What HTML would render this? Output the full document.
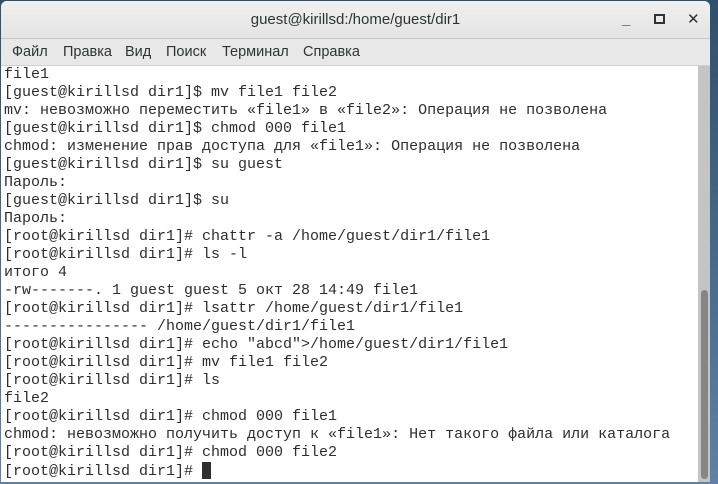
<!DOCTYPE html>
<html><head><meta charset="utf-8"><style>
body{margin:0;width:718px;height:484px;background:linear-gradient(#2f4f6b,#5d82a6);overflow:hidden;position:relative;font-family:"Liberation Sans","DejaVu Sans",sans-serif}
.win{position:absolute;left:1px;top:1px;width:709px;height:481px;background:#fff;border-radius:6px 6px 0 0;overflow:hidden}
.title{position:absolute;left:0;top:0;width:709px;height:37px;background:linear-gradient(#f0f0f0,#e4e4e4);border-bottom:1px solid #c8c8c8;text-align:center;line-height:37px;font-size:15px;color:#2e3436}
.menu{position:absolute;left:0;top:38px;width:709px;height:26px;background:#e8e8e8;border-bottom:1px solid #d0d0d0;font-size:14.5px;color:#2e3436;line-height:26px}
.menu span{position:absolute;top:0}
.b{position:absolute;top:0;font-size:15px;font-weight:bold;color:#2e3436}
.term{position:absolute;left:3px;top:65px;font-family:"Liberation Mono","DejaVu Sans Mono",monospace;font-size:15px;line-height:18px;color:#2e2e2e;white-space:pre}
.sb{position:absolute;left:697px;top:65px;width:12px;height:416px;background:#c4c4c4}
.sl{position:absolute;left:700px;top:289px;width:7px;height:189px;background:#858585;border-radius:4px}
.cur{display:inline-block;width:9px;height:17px;background:#2e2e2e;vertical-align:-4px}
</style></head><body>
<div class="win">
<div class="title">guest@kirillsd:/home/guest/dir1
<span class="b" style="left:621px">_</span>
<span class="b" style="left:653px;top:13px;width:7px;height:6px;border:2px solid #2e3436;line-height:0"></span>
<span class="b" style="left:686px">✕</span></div>
<div class="menu"><span style="left:11px">Файл</span><span style="left:62px">Правка</span><span style="left:124px">Вид</span><span style="left:165px">Поиск</span><span style="left:221px">Терминал</span><span style="left:302px">Справка</span></div>
<div class="sb"></div><div class="sl"></div>
<div class="term">file1
[guest@kirillsd dir1]$ mv file1 file2
mv: невозможно переместить «file1» в «file2»: Операция не позволена
[guest@kirillsd dir1]$ chmod 000 file1
chmod: изменение прав доступа для «file1»: Операция не позволена
[guest@kirillsd dir1]$ su guest
Пароль:
[guest@kirillsd dir1]$ su
Пароль:
[root@kirillsd dir1]# chattr -a /home/guest/dir1/file1
[root@kirillsd dir1]# ls -l
итого 4
-rw-------. 1 guest guest 5 окт 28 14:49 file1
[root@kirillsd dir1]# lsattr /home/guest/dir1/file1
---------------- /home/guest/dir1/file1
[root@kirillsd dir1]# echo "abcd">/home/guest/dir1/file1
[root@kirillsd dir1]# mv file1 file2
[root@kirillsd dir1]# ls
file2
[root@kirillsd dir1]# chmod 000 file1
chmod: невозможно получить доступ к «file1»: Нет такого файла или каталога
[root@kirillsd dir1]# chmod 000 file2
[root@kirillsd dir1]# <span class="cur"></span></div>
</div>
</body></html>
